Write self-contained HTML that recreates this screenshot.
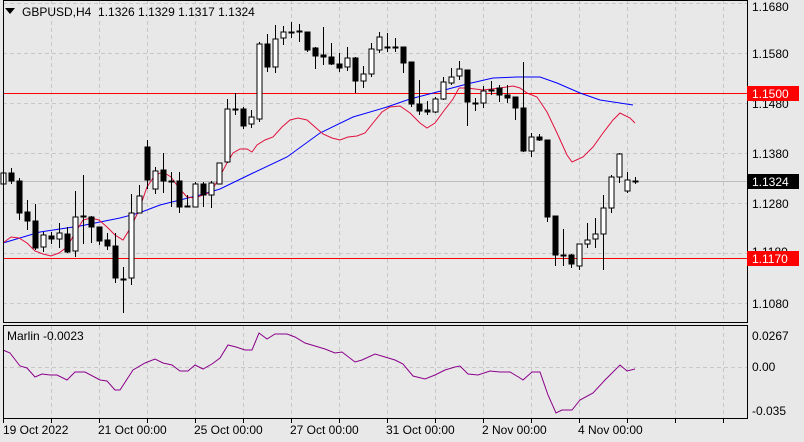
<!DOCTYPE html>
<html><head><meta charset="utf-8"><style>
html,body{margin:0;padding:0;background:#e8e8e8;width:804px;height:442px;overflow:hidden}
svg{position:absolute;left:0;top:0}
text{font-family:"Liberation Sans",sans-serif;font-size:12px;fill:#000}
</style></head><body>
<svg width="804" height="442" viewBox="0 0 804 442">
<rect x="0" y="0" width="804" height="442" fill="#e8e8e8"/>
<g id="grid" stroke="#c8c8c8" stroke-dasharray="4,3" stroke-width="1"></g>
<line x1="3" y1="181.5" x2="747" y2="181.5" stroke="#bdbdbd"/>
<line x1="3" y1="93.5" x2="747" y2="93.5" stroke="#ff0000"/>
<line x1="3" y1="258.5" x2="747" y2="258.5" stroke="#ff0000"/>
<polyline id="blue" fill="none" stroke="#0000ff" stroke-width="1"/>
<polyline id="red" fill="none" stroke="#e0103c" stroke-width="1"/>
<g id="candles"></g>
<polyline id="marlin" fill="none" stroke="#8b008b" stroke-width="1"/>
<rect x="3.5" y="0.5" width="744" height="322" fill="none" stroke="#000"/>
<rect x="3.5" y="325.5" width="744" height="93" fill="none" stroke="#000"/>
<g id="ticks" stroke="#000"></g>
<path d="M5 8 L15 8 L10 14 Z" fill="#000"/>
<text x="22" y="16">GBPUSD,H4&#160;&#160;1.1326 1.1329 1.1317 1.1324</text>
<text x="7" y="340">Marlin -0.0023</text>
<text x="752" y="11">1.1680</text>
<text x="752" y="58">1.1580</text>
<text x="752" y="108">1.1480</text>
<text x="752" y="158">1.1380</text>
<text x="752" y="208">1.1280</text>
<text x="752" y="308">1.1080</text>
<text x="752" y="256">1.1180</text>
<rect x="747" y="86" width="52" height="15" fill="#ff0000"/>
<text x="752" y="98" style="fill:#fff">1.1500</text>
<rect x="747" y="174" width="52" height="15" fill="#000"/>
<text x="752" y="186" style="fill:#fff">1.1324</text>
<rect x="747" y="251" width="52" height="15" fill="#ff0000"/>
<text x="752" y="263" style="fill:#fff">1.1170</text>
<text x="752" y="340">0.0267</text>
<text x="752" y="371">0.00</text>
<text x="752" y="415">-0.035</text>
<text x="3" y="434">19 Oct 2022</text>
<text x="98" y="434">21 Oct 00:00</text>
<text x="194" y="434">25 Oct 00:00</text>
<text x="290" y="434">27 Oct 00:00</text>
<text x="386" y="434">31 Oct 00:00</text>
<text x="482" y="434">2 Nov 00:00</text>
<text x="578" y="434">4 Nov 00:00</text>
</svg>
<script>
var NS="http://www.w3.org/2000/svg";
function el(p,t,a){var e=document.createElementNS(NS,t);for(var k in a)e.setAttribute(k,a[k]);p.appendChild(e);return e;}
var g=document.getElementById('grid');
[3,53,103,153,203,253,303].forEach(function(y){el(g,'line',{x1:3,x2:747,y1:y+.5,y2:y+.5});});
el(g,'line',{x1:3,x2:747,y1:367.5,y2:367.5});
for(var x=51;x<747;x+=48){el(g,'line',{x1:x+.5,x2:x+.5,y1:0,y2:322});el(g,'line',{x1:x+.5,x2:x+.5,y1:326,y2:418});}
var t=document.getElementById('ticks');
for(var x=3;x<747;x+=48){el(t,'line',{x1:x+.5,x2:x+.5,y1:418,y2:423});}
// [open, close, high, low] in pixel y
var C=[[184,173,164,186],[173,181,168,184],[181,213,178,220],[212,221,200,230],[221,248,204,250],[247,235,232,252],[236,239,232,244],[239,233,223,248],[234,252,227,253],[251,217,191,257],[216,216,175,244],[217,227,216,243],[227,241,227,245],[240,246,233,250],[246,278,233,283],[279,279,267,313],[278,213,194,285],[213,196,185,213],[147,180,140,189],[189,171,167,194],[170,181,153,193],[181,181,172,207],[181,207,172,213],[206,206,195,207],[207,184,182,207],[184,195,182,207],[195,183,181,208],[184,163,163,184],[162,109,99,163],[109,109,93,115],[109,126,107,129],[124,117,110,128],[119,44,42,122],[44,67,34,72],[67,39,25,73],[38,32,26,45],[32,32,22,38],[31,32,24,42],[32,50,32,52],[48,56,47,69],[55,57,27,65],[57,64,43,65],[64,68,53,72],[67,58,47,71],[58,81,57,93],[81,74,66,88],[74,49,43,77],[50,37,32,53],[47,47,33,52],[47,47,38,52],[47,63,47,73],[62,104,62,107],[104,111,80,115],[110,112,101,115],[112,99,97,113],[99,82,77,100],[83,77,68,85],[76,69,61,80],[70,102,70,126],[103,103,98,111],[103,91,86,108],[90,90,81,95],[88,95,85,102],[95,98,85,103],[97,108,97,120],[108,151,62,152],[151,137,133,157],[137,140,134,141],[140,217,140,222],[216,255,216,266],[255,255,229,266],[255,264,254,268],[266,244,244,270],[244,240,223,248],[239,234,218,248],[234,208,195,270],[208,177,175,213],[177,154,153,183],[191,180,172,193],[181,181,177,184]];
var cg=document.getElementById('candles');
C.forEach(function(c,i){var x=Math.round(3+8*i)+.5;var o=c[0],cl=c[1],h=c[2],l=c[3];
el(cg,'line',{x1:x,x2:x,y1:h,y2:l,stroke:'#000'});
var top=Math.min(o,cl),bot=Math.max(o,cl);
if(bot-top<1.5){el(cg,'line',{x1:x-3,x2:x+3,y1:top+.5,y2:top+.5,stroke:'#000','stroke-width':2});}
else el(cg,'rect',{x:x-2.5,y:top,width:5,height:bot-top,fill:cl<o?'#fff':'#000',stroke:'#000'});
});
var red=[[3,243],[11,237],[19,238],[27,243],[35,251],[43,254],[51,256],[59,253],[67,247],[75,233],[83,220],[91,218],[99,220],[107,227],[115,235],[123,240],[131,227],[139,210],[147,187],[155,175],[163,172],[171,177],[179,188],[187,197],[195,198],[203,195],[211,192],[219,178],[227,163],[233,153],[240,149],[247,149],[252,152],[257,145],[265,140],[273,137],[282,127],[290,120],[298,118],[307,120],[315,127],[323,134],[332,138],[340,140],[348,137],[357,136],[365,133],[373,123],[382,112],[390,107],[400,106],[410,113],[420,123],[427,128],[435,123],[443,112],[453,99],[459,88],[467,88],[483,90],[500,88],[513,86],[520,88],[527,93],[537,97],[547,112],[557,133],[567,155],[572,162],[583,157],[593,147],[603,133],[613,120],[620,113],[630,118],[635,123]];
var blue=[[3,243],[40,232],[80,226],[120,218],[139,213],[160,205],[200,195],[220,189],[253,173],[287,157],[320,133],[353,117],[387,107],[410,99],[437,92],[467,84],[493,78],[517,77],[540,77],[557,83],[580,93],[600,100],[633,105]];
var mar=[[3,350],[10,353],[20,366],[27,368],[35,377],[42,374],[50,375],[57,375],[67,380],[75,372],[85,372],[100,380],[107,381],[115,390],[120,390],[133,370],[145,363],[155,359],[163,363],[172,365],[180,371],[188,371],[195,365],[203,369],[212,364],[220,358],[228,345],[236,347],[245,350],[252,350],[259,333],[267,339],[275,334],[287,334],[295,337],[305,343],[315,346],[325,349],[335,353],[342,352],[355,362],[362,360],[375,354],[385,357],[395,360],[403,364],[413,376],[425,379],[435,375],[445,370],[455,367],[460,366],[468,374],[478,375],[490,371],[500,372],[510,372],[520,378],[523,380],[532,372],[540,372],[548,395],[556,413],[562,410],[572,410],[580,400],[593,393],[605,380],[620,365],[627,371],[635,369]];
function pts(a){return a.map(function(p){return p[0]+','+p[1];}).join(' ');}
document.getElementById('red').setAttribute('points',pts(red));
document.getElementById('blue').setAttribute('points',pts(blue));
document.getElementById('marlin').setAttribute('points',pts(mar));
</script>
</body></html>
